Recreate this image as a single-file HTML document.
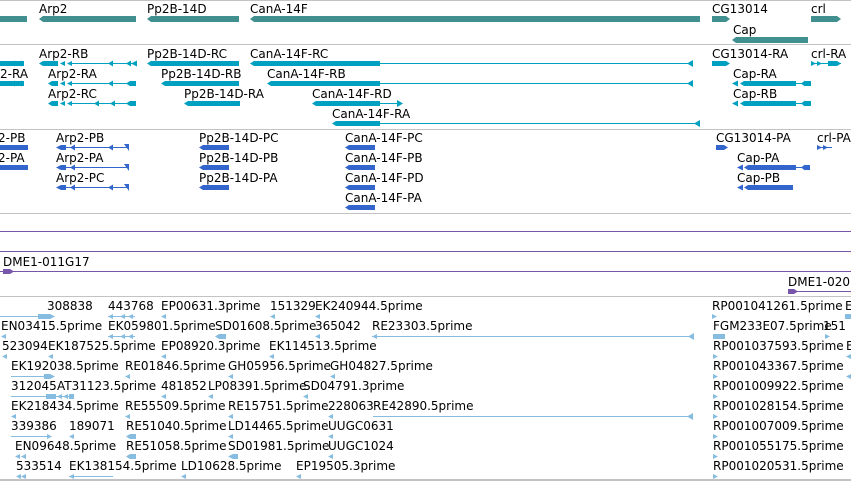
<!DOCTYPE html>
<html><head><meta charset="utf-8"><style>
html,body{margin:0;padding:0;background:#fff;}
svg{display:block}
text{font-family:"DejaVu Sans","Liberation Sans",sans-serif;font-size:12px;fill:#000}
.g{fill:#428f90}.t{fill:#00a0c0}.p{fill:#3366cc}.e{fill:#85bce0}.v{fill:#7755aa}
</style></head><body>
<svg width="851" height="481" xmlns="http://www.w3.org/2000/svg">
<g fill="#c3c3c3">
<rect x="0" y="0" width="851" height="1"/>
<rect x="0" y="44" width="851" height="1"/>
<rect x="0" y="129" width="851" height="1"/>
<rect x="0" y="213" width="851" height="1"/>
<rect x="0" y="296" width="851" height="1"/>
<rect x="0" y="479" width="851" height="2"/>
</g>
<g class="g">
<rect x="0" y="16" width="27" height="6"/>
<polygon points="39,19 43,16 136,16 136,22 43,22"/>
<polygon points="147,19 151,16 239,16 239,22 151,22"/>
<polygon points="250,19 254,16 700,16 700,22 254,22"/>
<polygon points="712,16 726,16 730,19 726,22 712,22"/>
<polygon points="811,16 837,16 841,19 837,22 811,22"/>
<polygon points="732,40 736,37 808,37 808,43 736,43"/>
</g>
<text x="39" y="13">Arp2</text><text x="147" y="13">Pp2B-14D</text><text x="250" y="13">CanA-14F</text>
<text x="712" y="13">CG13014</text><text x="811" y="13">crl</text><text x="733" y="34">Cap</text>

<g class="t">
<polygon points="0,61 24,61 24,66 0,66"/><polygon points="10,63.5 15,60.5 15,66.5"/><polygon points="17,63.5 22,60.5 22,66.5"/>
<polygon points="39,63.5 43,61 58,61 58,66 43,66"/><polygon points="60,63.5 65,61 65,66"/><polygon points="67,63.5 72,61 72,66"/><rect x="72" y="63" width="65" height="1"/><polygon points="108,63.5 113,60.5 113,66.5"/><polygon points="126,63.5 131,60.5 131,66.5"/><polygon points="131,63.5 137,60.5 137,66.5"/>
<polygon points="147,63.5 151,61 239,61 239,66 151,66"/>
<polygon points="250,63.5 254,61 380,61 380,66 254,66"/><rect x="380" y="63" width="313" height="1"/><polygon points="687,63.5 693,60 693,67"/>
<polygon points="712,61 726,61 730,63.5 726,66 712,66"/>
<polygon points="811,61 816,63.5 811,66"/><polygon points="817,61 822,63.5 817,66"/><rect x="811" y="63" width="30" height="1"/><polygon points="828,61 837,61 841,63.5 837,66 828,66"/>
<polygon points="0,81 24,81 24,86 0,86"/><polygon points="10,83.5 15,80.5 15,86.5"/><polygon points="17,83.5 22,80.5 22,86.5"/>
<polygon points="48,83.5 52,81 58,81 58,86 52,86"/><polygon points="60,83.5 65,81 65,86"/><polygon points="67,83.5 72,81 72,86"/><rect x="72" y="83" width="64" height="1"/><polygon points="108,83.5 113,80.5 113,86.5"/><polygon points="126,83.5 130,81 136,81 136,86 130,86"/>
<polygon points="161,83.5 165,81 239,81 239,86 165,86"/>
<polygon points="267,83.5 271,81 380,81 380,86 271,86"/><rect x="380" y="83" width="313" height="1"/><polygon points="687,83.5 693,80 693,87"/>
<polygon points="732,83.5 738,80.5 738,86.5"/><polygon points="740,83.5 744,81 796,81 796,86 744,86"/><rect x="796" y="83" width="6" height="1"/><polygon points="801,83.5 805,80.5 805,86.5"/><polygon points="805,81 811,81 811,86 805,86"/>
<polygon points="48,103.5 52,101 58,101 58,106 52,106"/><polygon points="60,103.5 65,101 65,106"/><polygon points="67,103.5 72,101 72,106"/><rect x="72" y="103" width="64" height="1"/><polygon points="94,103.5 99,100.5 99,106.5"/><polygon points="110,103.5 115,100.5 115,106.5"/><polygon points="126,103.5 130,101 136,101 136,106 130,106"/>
<polygon points="184,103.5 188,101 240,101 240,106 188,106"/>
<polygon points="312,103.5 316,101 380,101 380,106 316,106"/><rect x="380" y="103" width="22" height="1"/><polygon points="397,100 403,103.5 397,107"/>
<polygon points="732,103.5 738,100.5 738,106.5"/><polygon points="740,103.5 744,101 796,101 796,106 744,106"/><rect x="796" y="103" width="6" height="1"/><polygon points="801,103.5 805,100.5 805,106.5"/><polygon points="805,101 811,101 811,106 805,106"/>
<polygon points="332,123.5 336,121 380,121 380,126 336,126"/><rect x="380" y="123" width="320" height="1"/><polygon points="694,123.5 700,120 700,127"/>
</g>
<text x="39" y="58">Arp2-RB</text><text x="147" y="58">Pp2B-14D-RC</text><text x="250" y="58">CanA-14F-RC</text><text x="712" y="58">CG13014-RA</text><text x="811" y="58">crl-RA</text>
<text x="0" y="78">2-RA</text><text x="48" y="78">Arp2-RA</text><text x="161" y="78">Pp2B-14D-RB</text><text x="267" y="78">CanA-14F-RB</text><text x="733" y="78">Cap-RA</text>
<text x="48" y="98">Arp2-RC</text><text x="184" y="98">Pp2B-14D-RA</text><text x="312" y="98">CanA-14F-RD</text><text x="733" y="98">Cap-RB</text>
<text x="332" y="118">CanA-14F-RA</text>

<g class="p">
<polygon points="0,145 28,145 28,150 0,150"/>
<polygon points="56,147.5 61,145 66,145 66,150 61,150"/><rect x="66" y="147" width="63" height="1"/><polygon points="70,147.5 75,144.5 75,150.5"/><polygon points="108,147.5 113,144.5 113,150.5"/><polygon points="124,144 129,144 129,151"/>
<polygon points="199,147.5 203,145 229,145 229,150 203,150"/>
<polygon points="345,147.5 349,145 375,145 375,150 349,150"/>
<polygon points="716,145 724,145 728,147.5 724,150 716,150"/>
<polygon points="817,145 822,147.5 817,150"/><polygon points="823,145 828,147.5 823,150"/><rect x="817" y="147" width="15" height="1"/>
<polygon points="0,165 28,165 28,170 0,170"/>
<polygon points="56,167.5 61,165 66,165 66,170 61,170"/><rect x="66" y="167" width="63" height="1"/><polygon points="70,167.5 75,164.5 75,170.5"/><polygon points="124,164 129,164 129,171"/>
<polygon points="199,167.5 203,165 229,165 229,170 203,170"/>
<polygon points="345,167.5 349,165 375,165 375,170 349,170"/>
<polygon points="737,167.5 743,164.5 743,170.5"/><polygon points="744,167.5 748,165 796,165 796,170 748,170"/><rect x="796" y="167" width="6" height="1"/><polygon points="801,167.5 805,164.5 805,170.5"/><polygon points="805,165 810,165 810,170 805,170"/>
<polygon points="56,187.5 61,185 66,185 66,190 61,190"/><rect x="66" y="187" width="63" height="1"/><polygon points="70,187.5 75,184.5 75,190.5"/><polygon points="108,187.5 113,184.5 113,190.5"/><polygon points="124,184 129,184 129,191"/>
<polygon points="199,187.5 203,185 229,185 229,190 203,190"/>
<polygon points="345,187.5 349,185 375,185 375,190 349,190"/>
<polygon points="737,187.5 743,184.5 743,190.5"/><polygon points="744,187.5 748,185 793,185 793,190 748,190"/>
<polygon points="345,207.5 349,205 375,205 375,210 349,210"/>
</g>
<text x="-2" y="142">2-PB</text><text x="56" y="142">Arp2-PB</text><text x="199" y="142">Pp2B-14D-PC</text><text x="345" y="142">CanA-14F-PC</text><text x="716" y="142">CG13014-PA</text><text x="817" y="142">crl-PA</text>
<text x="-2" y="162">2-PA</text><text x="56" y="162">Arp2-PA</text><text x="199" y="162">Pp2B-14D-PB</text><text x="345" y="162">CanA-14F-PB</text><text x="737" y="162">Cap-PA</text>
<text x="56" y="182">Arp2-PC</text><text x="199" y="182">Pp2B-14D-PA</text><text x="345" y="182">CanA-14F-PD</text><text x="737" y="182">Cap-PB</text>
<text x="345" y="202">CanA-14F-PA</text>

<g class="v">
<rect x="0" y="231" width="851" height="1"/>
<rect x="0" y="251" width="851" height="1"/>
<rect x="0" y="271" width="851" height="1"/>
<polygon points="3,269 10,269 14,271.5 10,274 3,274"/>
<rect x="788" y="291" width="63" height="1"/>
<polygon points="788,289 794,289 798,291.5 794,294 788,294"/>
</g>
<text x="3" y="266">DME1-011G17</text><text x="788" y="286">DME1-020</text>

<g class="e">
<rect x="0" y="316" width="40" height="1"/><rect x="38" y="314" width="12" height="5"/><polygon points="50,314 55,316.5 50,319"/>
<rect x="108" y="316" width="27" height="1"/><polygon points="108,316.5 113,314 113,319"/><polygon points="120,316.5 125,314 125,319"/><polygon points="128,316.5 133,314 133,319"/>
<polygon points="161,316.5 166,314 166,319"/><polygon points="270,316.5 275,314 275,319"/><polygon points="315,316.5 320,314 320,319"/>
<polygon points="712,314 717,316.5 712,319"/><rect x="845" y="314" width="6" height="5"/>
<polygon points="1,336.5 6,334 6,339"/><rect x="108" y="336" width="27" height="1"/><polygon points="108,336.5 113,334 113,339"/><polygon points="120,336.5 125,334 125,339"/><polygon points="128,336.5 133,334 133,339"/>
<polygon points="215,336.5 219,334 226,334 226,339 219,339"/><polygon points="315,336.5 320,334 320,339"/>
<rect x="372" y="336" width="322" height="1"/><polygon points="372,336.5 377,334 377,339"/><polygon points="688,336.5 694,333 694,340"/>
<rect x="713" y="334" width="12" height="5"/><polygon points="825,334 830,336.5 825,339"/>
<polygon points="2,356.5 7,354 7,359"/><polygon points="48,356.5 53,354 53,359"/><polygon points="161,356.5 166,354 166,359"/><polygon points="269,356.5 274,354 274,359"/><polygon points="713,354 718,356.5 713,359"/><polygon points="846,356.5 851,354 851,359"/>
<rect x="11" y="376" width="40" height="1"/><rect x="44" y="374" width="6" height="5"/><polygon points="50,374 55,376.5 50,379"/><polygon points="125,376.5 130,374 130,379"/><polygon points="228,376.5 233,374 233,379"/><polygon points="330,376.5 335,374 335,379"/><polygon points="713,374 718,376.5 713,379"/><polygon points="846,376.5 851,374 851,379"/>
<rect x="11" y="396" width="62" height="1"/><rect x="46" y="394" width="10" height="5"/><polygon points="57,396.5 62,394 62,399"/><polygon points="63,396.5 68,394 68,399"/><polygon points="69,394 74,394 74,399 69,399"/><polygon points="161,396.5 166,394 166,399"/><polygon points="208,396.5 213,394 213,399"/><polygon points="303,396.5 308,394 308,399"/><polygon points="713,394 718,396.5 713,399"/>
<polygon points="11,416.5 16,414 16,419"/><polygon points="125,416.5 130,414 130,419"/><polygon points="228,416.5 233,414 233,419"/><polygon points="328,416.5 333,414 333,419"/><rect x="373" y="416" width="320" height="1"/><polygon points="687,416.5 693,413 693,420"/><polygon points="713,414 718,416.5 713,419"/>
<rect x="11" y="436" width="40" height="1"/><polygon points="47,434 52,436.5 47,439"/><polygon points="69,436.5 74,434 74,439"/><polygon points="126,436.5 130,434 136,434 136,439 130,439"/><polygon points="228,436.5 233,434 233,439"/><polygon points="328,436.5 333,434 333,439"/><polygon points="713,434 718,436.5 713,439"/>
<polygon points="15,456.5 20,454 20,459"/><polygon points="21,456.5 26,454 26,459"/><polygon points="126,456.5 130,454 136,454 136,459 130,459"/><polygon points="228,456.5 233,454 238,454 238,459 233,459"/><polygon points="328,456.5 333,454 333,459"/><polygon points="713,454 718,456.5 713,459"/>
<polygon points="16,476.5 21,474 21,479"/><polygon points="21,476.5 26,474 26,479"/><rect x="69" y="476" width="44" height="1"/><polygon points="69,476.5 74,474 74,479"/><polygon points="181,476.5 186,474 186,479"/><polygon points="296,476.5 301,474 301,479"/><polygon points="713,474 718,476.5 713,479"/>
</g>
<text x="47" y="310">308838</text><text x="108" y="310">443768</text><text x="161" y="310">EP00631.3prime</text><text x="270" y="310">151329</text><text x="315" y="310">EK240944.5prime</text><text x="712" y="310">RP001041261.5prime</text><text x="845" y="310">E</text>
<text x="1" y="330">EN03415.5prime</text><text x="108" y="330">EK059801.5prime</text><text x="215" y="330">SD01608.5prime</text><text x="315" y="330">365042</text><text x="372" y="330">RE23303.5prime</text><text x="713" y="330">FGM233E07.5prime</text><text x="823" y="330">151</text>
<text x="2" y="350">523094</text><text x="48" y="350">EK187525.5prime</text><text x="161" y="350">EP08920.3prime</text><text x="269" y="350">EK114513.5prime</text><text x="713" y="350">RP001037593.5prime</text><text x="846" y="350">E</text>
<text x="11" y="370">EK192038.5prime</text><text x="125" y="370">RE01846.5prime</text><text x="228" y="370">GH05956.5prime</text><text x="330" y="370">GH04827.5prime</text><text x="713" y="370">RP001043367.5prime</text>
<text x="11" y="390">312045</text><text x="57" y="390">AT31123.5prime</text><text x="161" y="390">481852</text><text x="208" y="390">LP08391.5prime</text><text x="303" y="390">SD04791.3prime</text><text x="713" y="390">RP001009922.5prime</text>
<text x="11" y="410">EK218434.5prime</text><text x="125" y="410">RE55509.5prime</text><text x="228" y="410">RE15751.5prime</text><text x="328" y="410">228063</text><text x="373" y="410">RE42890.5prime</text><text x="713" y="410">RP001028154.5prime</text>
<text x="11" y="430">339386</text><text x="69" y="430">189071</text><text x="126" y="430">RE51040.5prime</text><text x="228" y="430">LD14465.5prime</text><text x="328" y="430">UUGC0631</text><text x="713" y="430">RP001007009.5prime</text>
<text x="15" y="450">EN09648.5prime</text><text x="126" y="450">RE51058.5prime</text><text x="228" y="450">SD01981.5prime</text><text x="328" y="450">UUGC1024</text><text x="713" y="450">RP001055175.5prime</text>
<text x="16" y="470">533514</text><text x="69" y="470">EK138154.5prime</text><text x="181" y="470">LD10628.5prime</text><text x="296" y="470">EP19505.3prime</text><text x="713" y="470">RP001020531.5prime</text>
</svg>
</body></html>
